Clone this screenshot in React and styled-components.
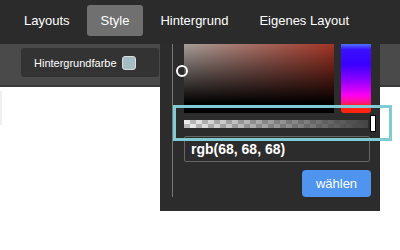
import styled, { createGlobalStyle } from 'styled-components';

const GlobalStyle = createGlobalStyle`
  html, body {
    margin: 0;
    padding: 0;
    background: #fff;
    font-family: 'Liberation Sans', Arial, sans-serif;
  }
`;

const Page = styled.div`
  position: relative;
  width: 400px;
  height: 250px;
  overflow: hidden;
  background: #fff;
`;

const TopBar = styled.nav`
  height: 44px;
  background: #2b2b2b;
  display: flex;
  align-items: flex-start;
  gap: 3px;
  padding: 5px 0 0 10px;
  box-sizing: border-box;
`;

const Tab = styled.div`
  height: 31px;
  padding: 0 14px;
  display: flex;
  align-items: center;
  border-radius: 3px;
  color: #fff;
  font-size: 13px;
  background: ${({ $active }) => ($active ? '#707070' : 'transparent')};
`;

const SubBar = styled.div`
  height: 41px;
  background: #4a4a4a;
  border-bottom: 2px solid #3a3a3a;
  padding: 4px 0 0 21px;
  box-sizing: content-box;
  box-sizing: border-box;
  height: 43px;
`;

const ColorButton = styled.div`
  width: 138px;
  height: 29px;
  box-sizing: border-box;
  background: #333;
  border-radius: 3px;
  display: flex;
  align-items: center;
  padding-left: 13px;
  gap: 5px;
  color: #fff;
  font-size: 11px;
`;

const Swatch = styled.span`
  width: 12px;
  height: 12px;
  border-radius: 3px;
  border: 1px solid #ddd;
  background: #a4bfc4;
`;

const Content = styled.div`
  padding-top: 4px;
`;

const SideStub = styled.div`
  width: 2px;
  height: 34px;
  background: #f0f0f0;
`;

const Popup = styled.div`
  position: absolute;
  left: 160px;
  top: 44px;
  width: 220px;
  height: 167px;
  box-sizing: border-box;
  background: #2c2c2c;
  padding: 0 0 14px 12px;
`;

const PickerBody = styled.div`
  height: 153px;
  border-left: 1px solid #777;
  padding-left: 11px;
  display: flex;
  flex-direction: column;
`;

const SpectrumRow = styled.div`
  display: flex;
  gap: 7px;
`;

const Saturation = styled.div`
  width: 150px;
  height: 69px;
  background:
    linear-gradient(to bottom, rgba(0, 0, 0, 0) 0%, #000 86%),
    linear-gradient(to right, #a89e99 0%, #a33425 100%);
`;

const HueBar = styled.div`
  width: 30px;
  height: 69px;
  border-radius: 0 0 3px 3px;
  background: linear-gradient(
    to bottom,
    #4d72ff 0%,
    #3a10ff 8%,
    #3a00ff 30%,
    #9a00ff 55%,
    #ff00f0 75%,
    #ff1488 85%,
    #ff2410 89%,
    #ff2410 100%
  );
`;

const AlphaRow = styled.div`
  margin-top: 2px;
  height: 17px;
  display: flex;
  align-items: center;
  gap: 2px;
`;

const AlphaBar = styled.div`
  width: 184px;
  height: 8px;
  background:
    linear-gradient(to right, rgba(68, 68, 68, 0) 0%, rgba(68, 68, 68, 1) 100%),
    repeating-conic-gradient(#bbb 0% 25%, #eee 0% 50%) 0 0 / 12px 8px;
`;

const AlphaHandle = styled.div`
  width: 4px;
  height: 15px;
  background: #fff;
  border: 1px solid #000;
`;

const ValueInput = styled.div`
  margin-top: 4px;
  width: 186px;
  height: 26px;
  box-sizing: border-box;
  border: 1px solid #666;
  border-radius: 2px;
  display: flex;
  align-items: center;
  padding-left: 6px;
  color: #fff;
  font-size: 14px;
  font-weight: bold;
`;

const Actions = styled.div`
  margin-top: 8px;
  width: 187px;
  display: flex;
  justify-content: flex-end;
`;

const ChooseButton = styled.div`
  width: 69px;
  height: 27px;
  border-radius: 4px;
  background: #4f94ef;
  color: #fff;
  font-size: 13px;
  display: flex;
  align-items: center;
  justify-content: center;
`;

const Cursor = styled.div`
  position: absolute;
  left: 16px;
  top: 21px;
  width: 12px;
  height: 12px;
  box-sizing: border-box;
  border: 2px solid #fff;
  border-radius: 50%;
`;

const Highlight = styled.div`
  position: absolute;
  left: 13px;
  top: 61px;
  width: 219px;
  height: 36px;
  box-sizing: border-box;
  border: 3px solid #80cbd4;
`;

export default function App() {
  const tabs = ['Layouts', 'Style', 'Hintergrund', 'Eigenes Layout'];

  return (
    <Page>
      <GlobalStyle />
      <TopBar>
        {tabs.map((t) => (
          <Tab key={t} $active={t === 'Style'}>
            {t}
          </Tab>
        ))}
      </TopBar>
      <SubBar>
        <ColorButton>
          Hintergrundfarbe
          <Swatch />
        </ColorButton>
      </SubBar>
      <Content>
        <SideStub />
      </Content>

      <Popup>
        <PickerBody>
          <SpectrumRow>
            <Saturation />
            <HueBar />
          </SpectrumRow>
          <AlphaRow>
            <AlphaBar />
            <AlphaHandle />
          </AlphaRow>
          <ValueInput>rgb(68, 68, 68)</ValueInput>
          <Actions>
            <ChooseButton>wählen</ChooseButton>
          </Actions>
        </PickerBody>
        <Cursor />
        <Highlight />
      </Popup>
    </Page>
  );
}
